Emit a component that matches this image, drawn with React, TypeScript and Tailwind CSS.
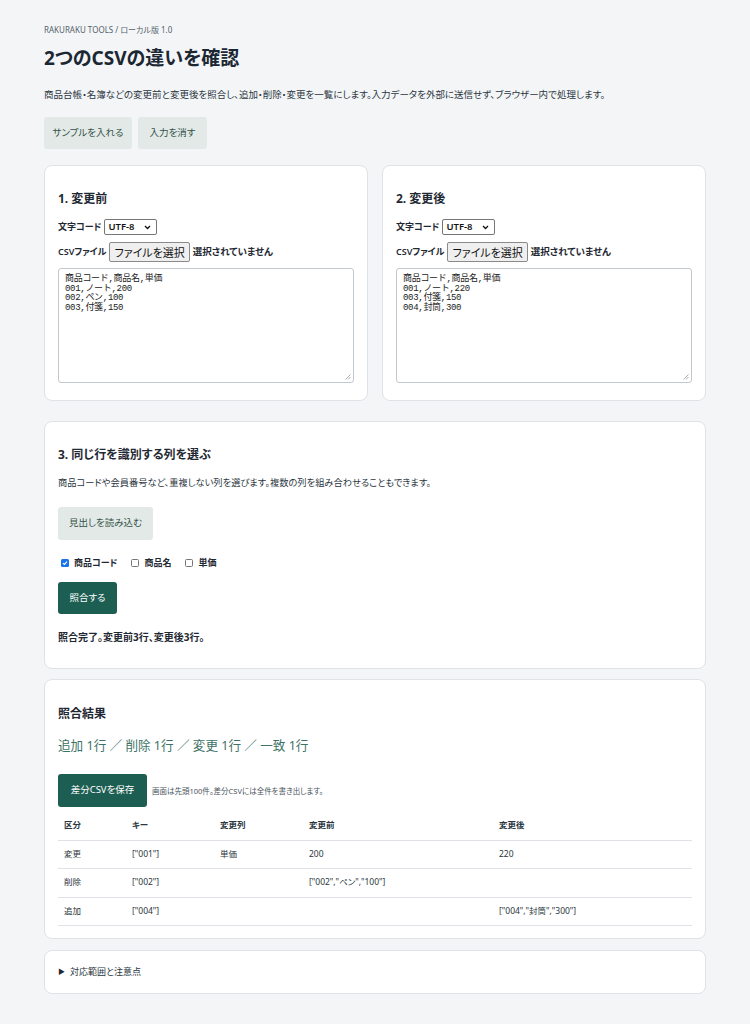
import React from "react";

const jp = "font-['Noto_Sans','Noto_Sans_CJK_JP',sans-serif] [font-feature-settings:'palt']";

function FileRow() {
  return (
    <div className="flex items-center gap-[3px] mt-[7px] h-[20px]">
      <span className="text-[9px] font-semibold text-[#1f2933]">CSVファイル</span>
      <span className="h-[20px] px-[4px] flex items-center border border-[#8a8a8a] rounded-[2px] bg-[#efefef] text-[11px] text-[#111] font-['Noto_Sans_CJK_JP',sans-serif]">
        ファイルを選択
      </span>
      <span className="text-[9.5px] font-semibold text-[#1f2933]">選択されていません</span>
    </div>
  );
}

function EncodingRow() {
  return (
    <div className="flex items-center gap-[3px] mt-[12px] h-[16px]">
      <span className="text-[9px] font-semibold text-[#1f2933]">文字コード</span>
      <span className="h-[16px] w-[53px] px-[3px] flex items-center justify-between border border-[#767676] rounded-[2px] bg-white text-[9.5px] font-semibold text-[#111]">
        UTF-8
        <svg width="7" height="5" viewBox="0 0 7 5" className="mr-[2px]">
          <path d="M1 1l2.5 2.5L6 1" stroke="#111" strokeWidth="1.3" fill="none" />
        </svg>
      </span>
    </div>
  );
}

function InputCard({ title, lines }: { title: string; lines: string[] }) {
  return (
    <div className="bg-white border border-[#dfe3e7] rounded-[8px] px-[13px] pt-[24px] pb-[17px]">
      <h2 className="text-[12px] leading-[17px] font-bold text-[#1f2933]">{title}</h2>
      <EncodingRow />
      <FileRow />
      <div className="relative mt-[6px] h-[115px] border border-[#c3c8cd] rounded-[3px] px-[6px] pt-[6px] pb-[5px] bg-white">
        <pre className="font-['Liberation_Mono','Noto_Sans_CJK_JP',monospace] text-[9px] leading-[9.5px] text-[#222] [font-feature-settings:normal] tracking-[-0.3px]">
          {lines.join("\n")}
        </pre>
        <svg width="6" height="6" viewBox="0 0 6 6" className="absolute right-[2px] bottom-[2px]">
          <path d="M5.5 0.5L0.5 5.5M5.5 3L3 5.5" stroke="#999" strokeWidth="0.8" />
        </svg>
      </div>
    </div>
  );
}

function Check({ checked, label }: { checked?: boolean; label: string }) {
  return (
    <label className="flex items-center gap-[5px]">
      <span
        className={
          checked
            ? "w-[8px] h-[8px] rounded-[1.5px] bg-[#1a73e8] flex items-center justify-center"
            : "w-[8px] h-[8px] rounded-[1.5px] border border-[#767676] bg-white"
        }
      >
        {checked && (
          <svg width="6" height="6" viewBox="0 0 6 6">
            <path d="M1 3.1l1.4 1.4L5 1.6" stroke="#fff" strokeWidth="1.2" fill="none" />
          </svg>
        )}
      </span>
      <span className="text-[9px] font-bold text-[#1f2933]">{label}</span>
    </label>
  );
}

const rows = [
  ["変更", '["001"]', "単価", "200", "220"],
  ["削除", '["002"]', "", '["002","ペン","100"]', ""],
  ["追加", '["004"]', "", "", '["004","封筒","300"]'],
];

export default function App() {
  return (
    <div className={`min-h-[1024px] bg-[#f3f5f7] text-[#1f2933] ${jp}`}>
      <div className="px-[44px] pt-[24px] pb-[30px]">
        <p className="text-[8px] leading-[12px] text-[#56616b]">RAKURAKU TOOLS / ローカル版 1.0</p>
        <h1 className="mt-[8px] text-[19px] leading-[28px] font-bold text-[#1b2733]">2つのCSVの違いを確認</h1>
        <p className="mt-[16px] text-[9.5px] leading-[14px] text-[#2b3640]">
          商品台帳・名簿などの変更前と変更後を照合し、追加・削除・変更を一覧にします。入力データを外部に送信せず、ブラウザー内で処理します。
        </p>
        <div className="mt-[15px] flex gap-[6px]">
          <button className="h-[32px] w-[88px] rounded-[3px] bg-[#e3e9e6] text-[9.5px] text-[#31524a]">サンプルを入れる</button>
          <button className="h-[32px] w-[69px] rounded-[3px] bg-[#e3e9e6] text-[9.5px] text-[#31524a]">入力を消す</button>
        </div>

        <div className="mt-[16px] grid grid-cols-2 gap-[14px]">
          <InputCard title="1. 変更前" lines={["商品コード,商品名,単価", "001,ノート,200", "002,ペン,100", "003,付箋,150"]} />
          <InputCard title="2. 変更後" lines={["商品コード,商品名,単価", "001,ノート,220", "003,付箋,150", "004,封筒,300"]} />
        </div>

        <section className="mt-[20px] bg-white border border-[#dfe3e7] rounded-[8px] px-[13px] pt-[24px] pb-[24px]">
          <h2 className="text-[12px] leading-[17px] font-bold text-[#1f2933]">3. 同じ行を識別する列を選ぶ</h2>
          <p className="mt-[13px] text-[9.25px] leading-[14px] text-[#2b3640]">
            商品コードや会員番号など、重複しない列を選びます。複数の列を組み合わせることもできます。
          </p>
          <button className="mt-[17px] h-[33px] w-[95px] rounded-[3px] bg-[#e3e9e6] text-[9.5px] text-[#31524a]">見出しを読み込む</button>
          <div className="mt-[16px] flex items-center gap-[14px] pl-[3px] h-[13px]">
            <Check checked label="商品コード" />
            <Check label="商品名" />
            <Check label="単価" />
          </div>
          <button className="mt-[13px] h-[32px] w-[59px] rounded-[3px] bg-[#1d5e52] text-[9.5px] text-white">照合する</button>
          <p className="mt-[16px] text-[10px] leading-[14px] font-bold text-[#1f2933]">照合完了。変更前3行、変更後3行。</p>
        </section>

        <section className="mt-[10px] bg-white border border-[#dfe3e7] rounded-[8px] px-[13px] pt-[25px] pb-[12px]">
          <h2 className="text-[12px] leading-[17px] font-bold text-[#1f2933]">照合結果</h2>
          <p className="mt-[14px] text-[12.6px] leading-[20px] text-[#3d7266]">追加 1行 ／ 削除 1行 ／ 変更 1行 ／ 一致 1行</p>
          <div className="mt-[18px] flex items-center gap-[5px]">
            <button className="h-[33px] w-[89px] rounded-[3px] bg-[#1d5e52] text-[9.5px] text-white">差分CSVを保存</button>
            <span className="text-[7.5px] text-[#4a545d] mt-[2px]">画面は先頭100件。差分CSVには全件を書き出します。</span>
          </div>
          <table className="mt-[5px] w-full border-collapse text-[8.5px] text-[#2b3640]">
            <thead>
              <tr className="h-[28px] border-b border-[#dfe3e7]">
                <th className="w-[74px] pl-[6px] text-left font-bold">区分</th>
                <th className="w-[88px] text-left font-bold">キー</th>
                <th className="w-[89px] text-left font-bold">変更列</th>
                <th className="w-[190px] text-left font-bold">変更前</th>
                <th className="text-left font-bold">変更後</th>
              </tr>
            </thead>
            <tbody>
              {rows.map((r, i) => (
                <tr key={i} className="h-[28.5px] border-b border-[#dfe3e7]">
                  <td className="pl-[6px]">{r[0]}</td>
                  <td>{r[1]}</td>
                  <td>{r[2]}</td>
                  <td>{r[3]}</td>
                  <td>{r[4]}</td>
                </tr>
              ))}
            </tbody>
          </table>
        </section>

        <section className="mt-[11px] h-[44px] bg-white border border-[#dfe3e7] rounded-[8px] px-[13px] flex items-center">
          <span className="text-[7px] text-[#1f2933] mr-[5px]">▶</span>
          <span className="text-[9px] text-[#2b3640]">対応範囲と注意点</span>
        </section>
      </div>
    </div>
  );
}
